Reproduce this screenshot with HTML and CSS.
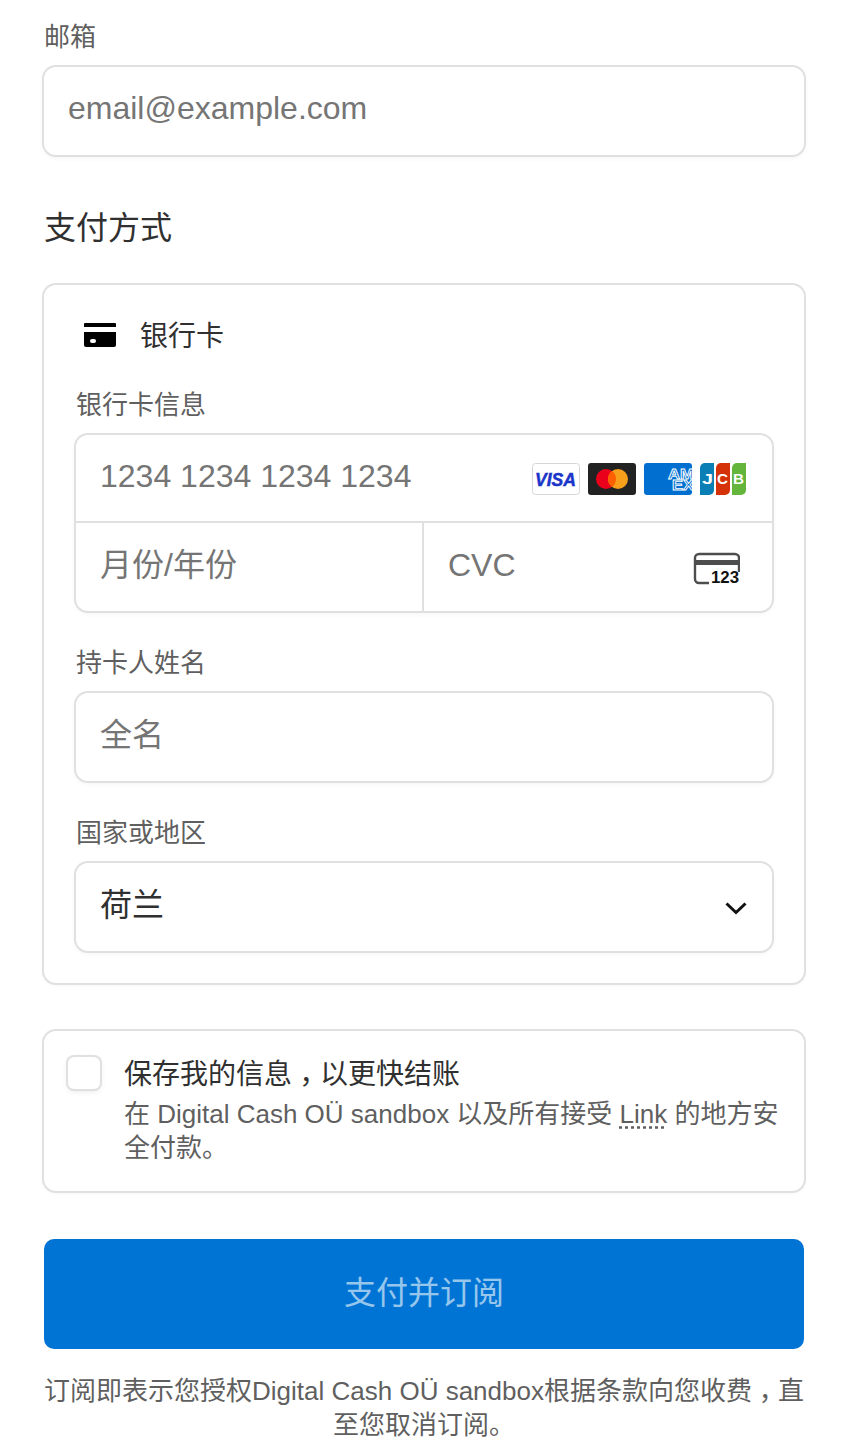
FILE: index.html
```html
<!DOCTYPE html>
<html lang="zh">
<head>
<meta charset="utf-8">
<title>支付并订阅</title>
<link rel="stylesheet" href="styles.css">
</head>
<body>
<main class="page">
  <label class="label label-email">邮箱</label>
  <div class="input"><span class="ph">email@example.com</span></div>

  <h2 class="heading">支付方式</h2>

  <section class="card">
    <div class="method">
      <svg class="method-icon" width="32" height="24" viewBox="0 0 32 24"><path d="M1 0h30a1 1 0 0 1 1 1v3H0V1a1 1 0 0 1 1-1z" fill="#000"/><path d="M0 9h32v13a2 2 0 0 1-2 2H2a2 2 0 0 1-2-2z" fill="#000"/><rect x="6" y="16" width="6" height="4" rx="2" fill="#fff"/></svg>
      <span class="method-name">银行卡</span>
    </div>

    <label class="label label-first">银行卡信息</label>
    <div class="group">
      <div class="row row-num">
        <span class="ph">1234 1234 1234 1234</span>
        <div class="brands">
          <svg width="48" height="32" viewBox="0 0 48 32"><rect x=".5" y=".5" width="47" height="31" rx="3" fill="#fff" stroke="#d6d6d6"/><text x="3" y="23" textLength="41" lengthAdjust="spacingAndGlyphs" class="t-visa">VISA</text></svg>
          <svg width="48" height="32" viewBox="0 0 48 32"><rect width="48" height="32" rx="3" fill="#222"/><circle cx="18" cy="16" r="10" fill="#eb001b"/><circle cx="30" cy="16" r="10" fill="#f79e1b"/><path d="M24 8a10 10 0 0 1 0 16a10 10 0 0 1 0-16z" fill="#ff5f00"/></svg>
          <svg width="48" height="32" viewBox="0 0 48 32"><rect width="48" height="32" rx="3" fill="#016fd0"/><text x="24" y="16" textLength="26" lengthAdjust="spacingAndGlyphs" class="t-amex">AM</text><text x="28" y="27" textLength="22" lengthAdjust="spacingAndGlyphs" class="t-amex">EX</text></svg>
          <svg width="46" height="32" viewBox="0 0 46 32"><path d="M0 5a5 5 0 0 1 5-5h9v27a5 5 0 0 1-5 5H0z" fill="#0a7fb5"/><path d="M16 5a5 5 0 0 1 5-5h9v27a5 5 0 0 1-5 5h-9z" fill="#d5320a"/><path d="M32 5a5 5 0 0 1 5-5h9v27a5 5 0 0 1-5 5h-9z" fill="#64b53c"/><text x="2" y="21" textLength="11" lengthAdjust="spacingAndGlyphs" class="t-jcb">J</text><text x="17" y="21" textLength="11" lengthAdjust="spacingAndGlyphs" class="t-jcb">C</text><text x="33" y="21" textLength="11" lengthAdjust="spacingAndGlyphs" class="t-jcb">B</text></svg>
        </div>
      </div>
      <div class="row-split">
        <div class="row cell cell-date"><span class="ph">月份/年份</span></div>
        <div class="row cell cell-cvc">
          <span class="ph">CVC</span>
          <svg class="cvc-icon" width="48" height="34" viewBox="0 0 48 34"><path d="M17 32H7a4 4 0 0 1-4-4V7a4 4 0 0 1 4-4h36a4 4 0 0 1 4 4v14" fill="none" stroke="#4d4d4d" stroke-width="2.400"/><rect x="3" y="9" width="44" height="5" fill="#4d4d4d"/><text x="19" y="32" textLength="28" lengthAdjust="spacingAndGlyphs" class="t-cvc">123</text></svg>
        </div>
      </div>
    </div>

    <label class="label label-next">持卡人姓名</label>
    <div class="input input-cjk"><span class="ph">全名</span></div>

    <label class="label label-next">国家或地区</label>
    <div class="input input-cjk input-select">
      <span class="value">荷兰</span>
      <svg class="chev" width="24" height="16" viewBox="0 0 24 16"><path d="M2.500 3.500L12 12.500L21.500 3.500" fill="none" stroke="#111" stroke-width="3"/></svg>
    </div>
  </section>

  <section class="save">
    <span class="checkbox"></span>
    <div class="save-text">
      <div class="save-title">保存我的信息<span class="comma" lang="zh-Hant">，</span>以更快结账</div>
      <div class="save-desc">在 Digital Cash OÜ sandbox 以及所有接受 <span class="link">Link</span> 的地方安全付款。</div>
    </div>
  </section>

  <button class="pay" type="button">支付并订阅</button>

  <p class="terms">订阅即表示您授权Digital Cash OÜ sandbox根据条款向您收费<span class="comma" lang="zh-Hant">，</span>直至您取消订阅。</p>
</main>
</body>
</html>
```
FILE: styles.css
```css
* { box-sizing: border-box; }
html, body { margin: 0; padding: 0; background: #fff; }
body {
  font-family: "Liberation Sans", "Noto Sans CJK SC", sans-serif;
  color: #1a1a1a;
  overflow: hidden;
  height: 1440px;
}
.page { padding: 20px 44px 0; }

.label {
  display: block;
  font-size: 26px;
  line-height: 34px;
  color: #5f5f5f;
}
.label-email { margin-bottom: 13px; }
.label-first { margin-bottom: 13px; }
.label-next { margin: 35px 0 13px; }

.input {
  height: 88px;
  border-radius: 12px;
  background: #fff;
  box-shadow: 0 0 0 2px #e0e0e0, 0 2px 6px rgba(0,0,0,.06);
  padding: 0 24px 6px;
  display: flex;
  align-items: center;
  font-size: 32px;
}
.input-cjk { padding-bottom: 4px; }
.ph { color: #757575; font-size: 32px; line-height: 40px; }
.value { color: #303030; font-size: 32px; line-height: 40px; }
.input-select { justify-content: space-between; }
.chev { margin-top: 6px; }

.heading {
  margin: 53px 0 0;
  font-size: 32px;
  line-height: 40px;
  font-weight: 400;
  color: #303030;
}

.card {
  margin-top: 37px;
  height: 698px;
  border-radius: 12px;
  box-shadow: 0 0 0 2px #e0e0e0, 0 2px 4px rgba(0,0,0,.05);
  padding: 0 32px;
}
.method {
  display: flex;
  align-items: center;
  height: 103px;
  padding-left: 8px;
  gap: 24px;
}
.method-name { font-size: 28px; line-height: 36px; color: #303030; }
.method-icon { flex: none; margin-bottom: 4px; }

.group {
  border-radius: 12px;
  box-shadow: 0 0 0 2px #e0e0e0, 0 2px 6px rgba(0,0,0,.06);
  overflow: hidden;
}
.row {
  display: flex;
  align-items: center;
  padding: 0 24px 4px;
  height: 86px;
}
.row-num { justify-content: space-between; padding-right: 26px; }
.brands { display: flex; gap: 8px; margin-top: 5px; }
.row-split {
  display: grid;
  grid-template-columns: 1fr 1fr;
  border-top: 2px solid #e0e0e0;
}
.cell { height: 88px; }
.cell-date { border-right: 2px solid #e0e0e0; }
.cell-cvc {
  justify-content: space-between;
  padding-right: 32px;
}
.cvc-icon { margin-top: 6px; }

.t-visa { font: italic 700 19px "Liberation Sans", sans-serif; fill: #1a35c9; stroke: #1a35c9; stroke-width: .5; }
.t-amex { font: 700 14px "Liberation Sans", sans-serif; fill: #016fd0; stroke: #fff; stroke-width: .8; }
.t-jcb { font: 700 14px "Liberation Sans", sans-serif; fill: #fff; }
.t-cvc { font: 700 16px "Liberation Sans", sans-serif; fill: #111; }

.comma {
  font-family: "Noto Sans CJK TC", sans-serif;
  line-height: 0;
  vertical-align: -.3em;
}

.save {
  margin-top: 48px;
  height: 160px;
  border-radius: 12px;
  box-shadow: 0 0 0 2px #e0e0e0, 0 2px 4px rgba(0,0,0,.05);
  padding: 26px 24px 0 24px;
  display: flex;
  gap: 24px;
}
.checkbox {
  flex: none;
  width: 32px;
  height: 32px;
  border-radius: 6px;
  background: #fff;
  box-shadow: 0 0 0 2px #e0e0e0, 0 2px 6px rgba(0,0,0,.1);
}
.save-title { font-size: 28px; line-height: 36px; color: #303030; }
.save-desc { font-size: 26px; line-height: 34px; color: #5f5f5f; margin-top: 4px; }
.link { text-decoration: underline dotted; text-underline-offset: 3px; }

.pay {
  display: block;
  width: 100%;
  height: 110px;
  margin-top: 48px;
  border: 0;
  border-radius: 10px;
  background: #0074d4;
  color: rgba(255,255,255,.6);
  font: 400 32px/40px "Liberation Sans", "Noto Sans CJK SC", sans-serif;
  padding: 0 0 2px;
}
.terms {
  margin: 25px 0 0;
  text-align: center;
  font-size: 26px;
  line-height: 34px;
  color: #5f5f5f;
}
```
